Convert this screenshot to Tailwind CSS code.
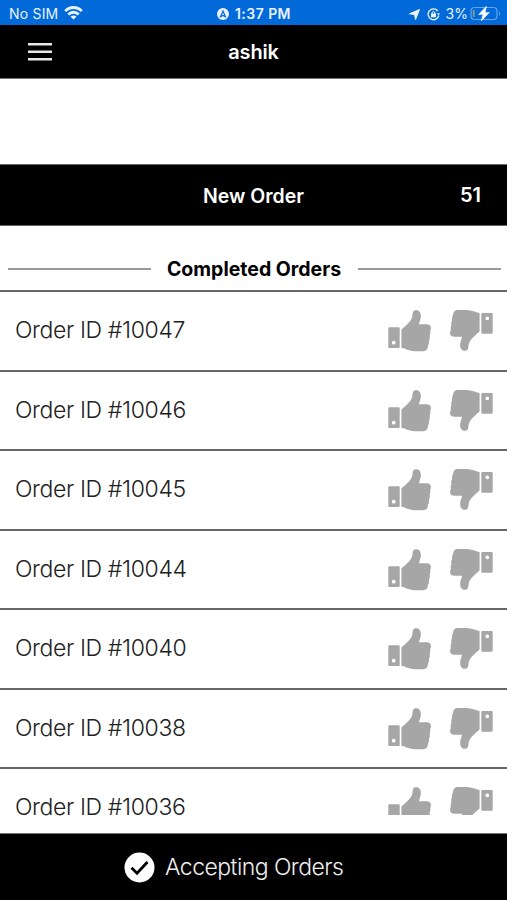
<!DOCTYPE html>
<html lang="en">
<head>
  <meta charset="UTF-8" />
  <meta name="viewport" content="width=device-width, initial-scale=1.0" />
  <title>Orders</title>
  <script src="https://cdn.jsdelivr.net/npm/@tailwindcss/browser@4"></script>
</head>
<body class="bg-white text-black font-['Inter','Liberation_Sans',sans-serif]">

  <!-- Shared icons -->
  <svg class="hidden">
    <symbol id="thumb" viewBox="0 0 43 42">
      <path fill-rule="evenodd" d="M1.3 17.3H10.7Q11.7 17.3 11.7 18.3V37Q11.7 38 10.7 38H1.3Q.3 38 .3 37V18.3Q.3 17.3 1.3 17.3ZM5.7 30.8A1.9 1.9 0 1 0 5.7 34.6A1.9 1.9 0 1 0 5.7 30.8Z" />
      <path d="M13.4 20.5C13.4 18.6 15 18.2 16.6 16.8C20 13.7 24 10 24.5 5.5C24.7 2 25.3 .2 28.2 .2C31.8 .2 33.2 3.6 32.8 7.2C32.5 10.2 31 12.5 31.1 14.2H38.6C41.6 14.2 43.2 16 42.9 18.4C42.8 19.6 42.2 20.3 42.2 21.2C42.4 22.4 42.5 24.4 41.6 25.6C42 27.2 41.9 29.4 40.9 30.8C41.2 32.4 40.9 34.6 39.9 35.8C40 39 38.4 41 35.2 41.2C28.5 41.6 22.6 40.9 18.4 39.4C16.4 38.7 15.4 38 13.4 37.8Z" />
    </symbol>
  </svg>

  <div class="h-[900px] flex flex-col overflow-hidden">

    <!-- Status bar -->
    <div class="h-[25px] shrink-0 bg-[#0269d9] text-[#e8f3ff] grid grid-cols-3 items-center pl-[9px] pr-[6px] text-sm leading-none">
      <div class="flex items-center gap-[6px] pt-[3px]">
        <span class="tracking-[0.2px] text-[14px]">No SIM</span>
        <svg class="w-[19px] h-[14px] -mt-[2px]" viewBox="0 0 19 14" fill="none" stroke="currentColor" stroke-width="2.8">
          <path d="M1.2 5.1C5.8.3 13.2.3 17.8 5.1M4.3 8.4C7.2 5.5 11.8 5.5 14.7 8.4" />
          <path d="M9.5 13.5L6.5 10.7Q9.5 8.2 12.5 10.7Z" fill="currentColor" stroke="none" />
        </svg>
      </div>
      <div class="flex items-center justify-center gap-[6px] pt-[3px] pr-[2px] font-semibold">
        <svg class="w-3 h-3" viewBox="0 0 12 12">
          <circle cx="6" cy="6" r="6" fill="currentColor" />
          <path d="M3.6 8.7L6 3L8.4 8.7L6 7.4Z" fill="none" stroke="#0269d9" stroke-width="1.2" />
        </svg>
        <span class="text-[14px] tracking-[0.45px] whitespace-nowrap">1:37 PM</span>
      </div>
      <div class="flex items-center justify-end pt-[3px]">
        <svg class="w-[11px] h-[11px] mr-[7px]" viewBox="0 0 11 11" fill="currentColor"><path d="M10.5.5L6.6 10.4L5.5 5.5L.5 4.8Z" stroke="currentColor" stroke-width="1" /></svg>
        <svg class="w-[13px] h-[13px] mr-[6px]" viewBox="0 0 13 13">
          <path d="M10.8 3A5.4 5.4 0 1 0 11.8 7.5" fill="none" stroke="currentColor" stroke-width="1.3" />
          <path d="M9.8 5.2H13L11.5 7.4Z" fill="currentColor" />
          <rect x="4" y="5.6" width="5" height="3.6" rx=".5" fill="currentColor" />
          <path d="M5.1 6V5A1.4 1.4 0 0 1 7.9 5V6" fill="none" stroke="currentColor" />
        </svg>
        <span class="text-[14px]">3%</span>
        <svg class="w-[31px] h-[15px] ml-[2px] -mt-[2px]" viewBox="0 0 31 15">
          <rect x="1" y="1.5" width="26" height="12" rx="3.5" fill="none" stroke="#62a5eb" stroke-width="1.2" />
          <path d="M29 5.2Q31.5 7.5 29 9.8Z" fill="#62a5eb" />
          <rect x="2.8" y="4" width="1.8" height="7" rx=".6" fill="#8a9b86" />
          <path d="M16.5 0L8.5 8.6H12.8L11.2 15L19.5 6.4H15.2Z" fill="white" stroke="white" stroke-width=".4" />
        </svg>
      </div>
    </div>

    <!-- Header -->
    <header class="h-[54px] shrink-0 bg-black text-white grid grid-cols-3 items-center border-b border-[#777]">
      <button class="ml-7 w-6 h-[18px]" aria-label="Menu">
        <svg class="w-6 h-[18px]" viewBox="0 0 24 18" fill="#e8e8e8"><path d="M0 0H24V2.6H0ZM0 7.5H24V10.1H0ZM0 15H24V17.6H0Z" /></svg>
      </button>
      <h1 class="text-center text-[20px] font-semibold tracking-[-0.2px]">ashik</h1>
    </header>

    <!-- New orders -->
    <section class="mt-[85px] h-[62px] shrink-0 bg-black text-white border-y border-[#666] grid grid-cols-3 items-center">
      <h2 class="col-start-2 pt-[3px] text-center text-[19.5px] font-semibold whitespace-nowrap">New Order</h2>
      <span class="text-right pr-[26px] pb-px text-[20px] font-semibold">51</span>
    </section>

    <!-- Completed orders -->
    <div class="h-[64px] shrink-0 flex items-center pl-2 pr-[6px] pt-[22px]">
      <div class="flex-1 h-[2px] bg-[#999]"></div>
      <h2 class="w-[207px] pr-px text-center text-[19.5px] leading-6 font-bold whitespace-nowrap">Completed Orders</h2>
      <div class="flex-1 h-[2px] bg-[#999]"></div>
    </div>
    <ul id="orders" class="flex-1 min-h-0 overflow-hidden"></ul>

    <!-- Footer -->
    <footer class="h-[67px] shrink-0 bg-black text-white border-t border-[#777] flex items-center gap-[10px] pl-[124px]">
      <svg class="w-[31px] h-[31px]" viewBox="0 0 31 31">
        <circle cx="15.5" cy="15.5" r="15" fill="white" />
        <path d="M7.5 15.8L13 21.2L23.5 10" fill="none" stroke="black" stroke-width="2.8" />
      </svg>
      <span class="text-[23px] font-light tracking-[-0.54px] text-[#eee]">Accepting Orders</span>
    </footer>
  </div>

  <script>
    const orders = [10047, 10046, 10045, 10044, 10040, 10038, 10036];

    document.getElementById("orders").innerHTML = orders.map((id, i) => `
      <li class="h-[79.5px] border-t-2 border-[#666] flex justify-between pl-[15px] pr-[14px]">
        <span class="pt-[22px] text-[23px] leading-8 font-light tracking-[-0.38px] text-[#222]">Order ID #${id}</span>
        <div class="mt-[18px] flex gap-[19px] overflow-hidden ${i === orders.length - 1 ? "h-[28px]" : "h-[42px]"}">
          <svg class="w-[43px] h-[42px] shrink-0 fill-[#a6a6a6]"><use href="#thumb" /></svg>
          <svg class="w-[43px] h-[42px] -mt-px shrink-0 rotate-180 fill-[#a6a6a6]"><use href="#thumb" /></svg>
        </div>
      </li>
    `).join("");
  </script>
</body>
</html>
